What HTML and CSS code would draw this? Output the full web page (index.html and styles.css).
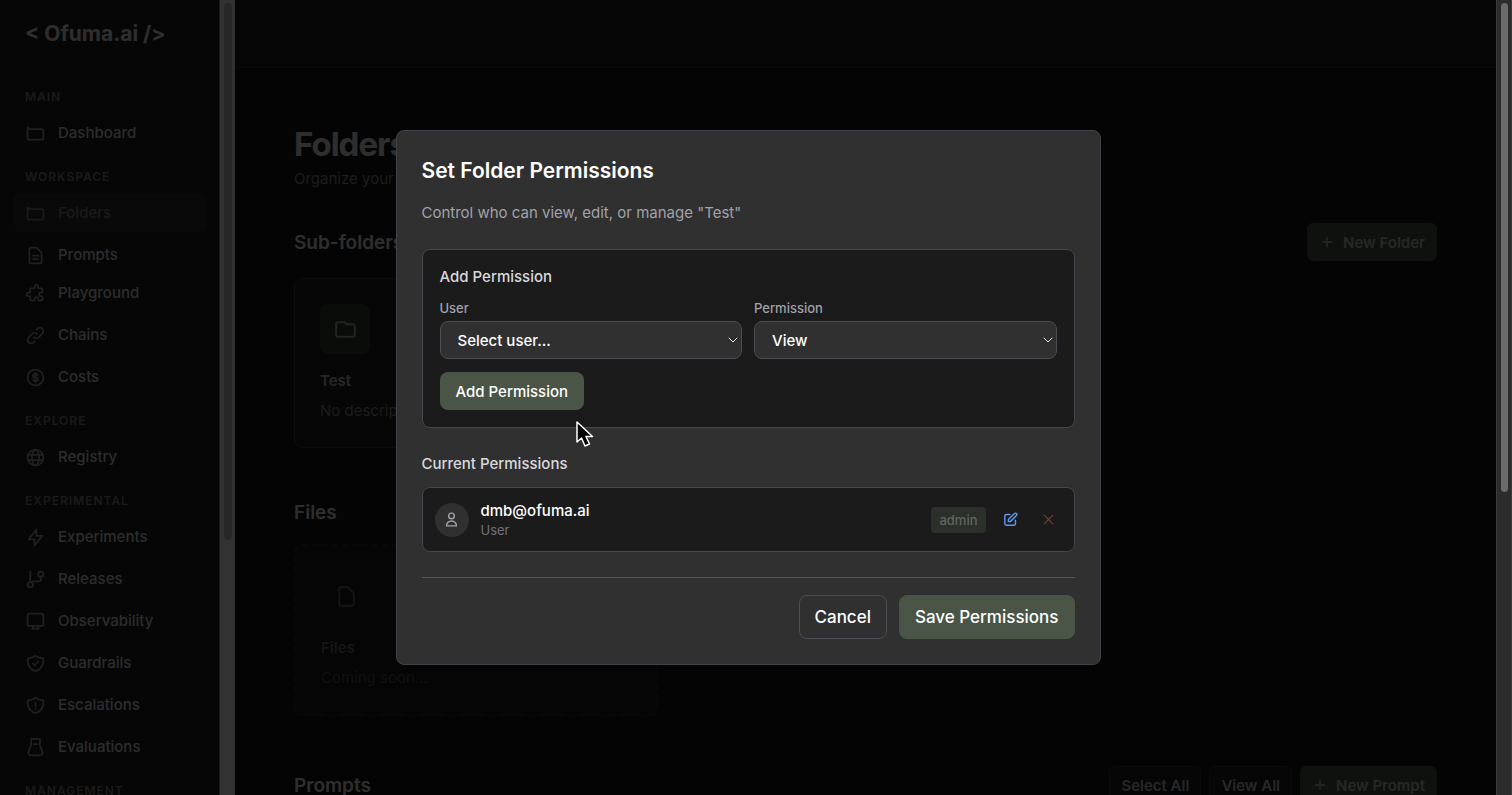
FILE: index.html
```html
<!DOCTYPE html>
<html lang="en">
<head>
    <meta charset="UTF-8">
    <meta name="viewport" content="width=device-width, initial-scale=1.0">
    <title>Folders - Ofuma.ai</title>
    <link rel="stylesheet" href="styles.css">
</head>
<body>
    <div class="app">
        <aside class="sidebar">
            <div class="sidebar-content">
                <div class="logo">&lt; Ofuma.ai /&gt;</div>
                <nav class="nav">
                    <h3 class="nav-label">MAIN</h3>
                    <a href="#" class="nav-item">
                        <svg viewBox="0 0 24 24"><path d="M3 7v10a2 2 0 002 2h14a2 2 0 002-2V9a2 2 0 00-2-2H5a2 2 0 00-2-2z"/></svg>
                        Dashboard
                    </a>
                    <h3 class="nav-label">WORKSPACE</h3>
                    <a href="#" class="nav-item active">
                        <svg viewBox="0 0 24 24"><path d="M3 7v10a2 2 0 002 2h14a2 2 0 002-2V9a2 2 0 00-2-2H5a2 2 0 00-2-2z"/></svg>
                        Folders
                    </a>
                    <div class="nav-group">
                        <a href="#" class="nav-item">
                            <svg viewBox="0 0 24 24"><path d="M9 12h6m-6 4h6m2 5H7a2 2 0 01-2-2V5a2 2 0 012-2h5.586a1 1 0 01.707.293l5.414 5.414a1 1 0 01.293.707V19a2 2 0 01-2 2z"/></svg>
                            Prompts
                        </a>
                        <a href="#" class="nav-item">
                            <svg viewBox="0 0 24 24"><path d="M11 4a2 2 0 114 0v1a1 1 0 001 1h3a1 1 0 011 1v3a1 1 0 01-1 1h-1a2 2 0 100 4h1a1 1 0 011 1v3a1 1 0 01-1 1h-3a1 1 0 01-1-1v-1a2 2 0 10-4 0v1a1 1 0 01-1 1H7a1 1 0 01-1-1v-3a1 1 0 00-1-1H4a2 2 0 110-4h1a1 1 0 001-1V7a1 1 0 011-1h3a1 1 0 001-1V4z"/></svg>
                            Playground
                        </a>
                    </div>
                    <a href="#" class="nav-item">
                        <svg viewBox="0 0 24 24"><path d="M13.828 10.172a4 4 0 00-5.656 0l-4 4a4 4 0 105.656 5.656l1.102-1.101m-.758-4.899a4 4 0 005.656 0l4-4a4 4 0 00-5.656-5.656l-1.1 1.1"/></svg>
                        Chains
                    </a>
                    <a href="#" class="nav-item">
                        <svg viewBox="0 0 24 24"><path d="M12 8c-1.657 0-3 .895-3 2s1.343 2 3 2 3 .895 3 2-1.343 2-3 2m0-8c1.11 0 2.08.402 2.599 1M12 8V7m0 1v8m0 0v1m0-1c-1.11 0-2.08-.402-2.599-1M21 12a9 9 0 11-18 0 9 9 0 0118 0z"/></svg>
                        Costs
                    </a>
                    <h3 class="nav-label">EXPLORE</h3>
                    <a href="#" class="nav-item">
                        <svg viewBox="0 0 24 24"><circle cx="12" cy="12" r="9"/><ellipse cx="12" cy="12" rx="4" ry="9"/><path d="M3.5 9h17M3.5 15h17"/></svg>
                        Registry
                    </a>
                    <h3 class="nav-label">EXPERIMENTAL</h3>
                    <a href="#" class="nav-item">
                        <svg viewBox="0 0 24 24"><path d="M13 10V3L4 14h7v7l9-11h-7z"/></svg>
                        Experiments
                    </a>
                    <a href="#" class="nav-item">
                        <svg viewBox="0 0 24 24"><path d="M6 3v12M18 9v3a2 2 0 01-2 2H9"/><circle cx="6" cy="18" r="3"/><circle cx="18" cy="6" r="3"/></svg>
                        Releases
                    </a>
                    <a href="#" class="nav-item">
                        <svg viewBox="0 0 24 24"><path d="M9 17v3H8h8h-1v-3M5 17h14a2 2 0 002-2V5a2 2 0 00-2-2H5a2 2 0 00-2 2v10a2 2 0 002 2z"/></svg>
                        Observability
                    </a>
                    <a href="#" class="nav-item">
                        <svg viewBox="0 0 24 24"><path d="M9 12l2 2 4-4m5.618-4.016A11.955 11.955 0 0112 2.944a11.955 11.955 0 01-8.618 3.04A12.02 12.02 0 003 9c0 5.591 3.824 10.29 9 11.622 5.176-1.332 9-6.03 9-11.622 0-1.042-.133-2.052-.382-3.016z"/></svg>
                        Guardrails
                    </a>
                    <a href="#" class="nav-item">
                        <svg viewBox="0 0 24 24"><path d="M12 9v4m0 3h.01m8.608-10.016A11.955 11.955 0 0112 2.944a11.955 11.955 0 01-8.618 3.04A12.02 12.02 0 003 9c0 5.591 3.824 10.29 9 11.622 5.176-1.332 9-6.03 9-11.622 0-1.042-.133-2.052-.382-3.016z"/></svg>
                        Escalations
                    </a>
                    <a href="#" class="nav-item">
                        <svg viewBox="0 0 24 24"><path d="M7 2h10v7l3 8a3 3 0 01-3 4H7a3 3 0 01-3-4l3-8zM10 8h4"/></svg>
                        Evaluations
                    </a>
                    <h3 class="nav-label">MANAGEMENT</h3>
                </nav>
            </div>
            <div class="scrollbar"><div class="thumb thumb-sidebar"></div></div>
        </aside>

        <div class="main">
            <header class="topbar"></header>
            <main class="content">
                <h1>Folders</h1>
                <p class="lead">Organize your prompts into folders</p>

                <section class="section">
                    <div class="section-head">
                        <h2>Sub-folders</h2>
                        <button class="btn-dark primary">
                            <svg viewBox="0 0 24 24"><path d="M12 5v14m7-7H5"/></svg>
                            New Folder
                        </button>
                    </div>
                    <div class="cards">
                        <div class="card">
                            <div class="card-icon">
                                <svg viewBox="0 0 24 24"><path d="M3 7v10a2 2 0 002 2h14a2 2 0 002-2V9a2 2 0 00-2-2h-6l-2-2H5a2 2 0 00-2 2z"/></svg>
                            </div>
                            <h3>Test</h3>
                            <p>No description</p>
                        </div>
                    </div>
                </section>

                <section class="section">
                    <div class="section-head">
                        <h2>Files</h2>
                    </div>
                    <div class="cards">
                        <div class="card coming-soon">
                            <div class="card-icon">
                                <svg viewBox="0 0 24 24"><path d="M7 21h10a2 2 0 002-2V9.414a1 1 0 00-.293-.707l-5.414-5.414A1 1 0 0012.586 3H7a2 2 0 00-2 2v14a2 2 0 002 2z"/></svg>
                            </div>
                            <h3>Files</h3>
                            <p>Coming soon...</p>
                        </div>
                    </div>
                </section>

                <section class="section">
                    <div class="section-head">
                        <h2>Prompts</h2>
                        <div class="actions">
                            <button class="btn-dark">Select All</button>
                            <button class="btn-dark">View All</button>
                            <button class="btn-dark primary">
                                <svg viewBox="0 0 24 24"><path d="M12 5v14m7-7H5"/></svg>
                                New Prompt
                            </button>
                        </div>
                    </div>
                </section>
            </main>
        </div>
        <div class="scrollbar page-scrollbar"><div class="thumb thumb-page"></div></div>
    </div>

    <div class="overlay">
        <div class="modal" role="dialog" aria-labelledby="modal-title">
            <h2 id="modal-title" class="modal-title">Set Folder Permissions</h2>
            <p class="modal-text">Control who can view, edit, or manage "Test"</p>

            <div class="panel">
                <h3 class="panel-title">Add Permission</h3>
                <div class="fields">
                    <div class="field">
                        <label for="user">User</label>
                        <div class="select-wrap">
                            <select id="user">
                                <option>Select user...</option>
                            </select>
                            <svg viewBox="0 0 10 6"><path d="M1 1l4 4 4-4"/></svg>
                        </div>
                    </div>
                    <div class="field">
                        <label for="permission">Permission</label>
                        <div class="select-wrap">
                            <select id="permission">
                                <option>View</option>
                                <option>Edit</option>
                                <option>Admin</option>
                            </select>
                            <svg viewBox="0 0 10 6"><path d="M1 1l4 4 4-4"/></svg>
                        </div>
                    </div>
                </div>
                <button class="btn-add">Add Permission</button>
            </div>

            <h3 class="list-title">Current Permissions</h3>
            <div class="permission">
                <div class="avatar">
                    <svg viewBox="0 0 24 24"><path d="M16 7a4 4 0 11-8 0 4 4 0 018 0zM12 14a7 7 0 00-7 7h14a7 7 0 00-7-7z"/></svg>
                </div>
                <div class="who">
                    <div class="email">dmb@ofuma.ai</div>
                    <div class="type">User</div>
                </div>
                <span class="badge">admin</span>
                <button class="icon-btn edit" aria-label="Edit permission">
                    <svg viewBox="0 0 24 24"><path d="M11 5H6a2 2 0 00-2 2v11a2 2 0 002 2h11a2 2 0 002-2v-5m-1.414-9.414a2 2 0 112.828 2.828L11.828 15H9v-2.828l8.586-8.586z"/></svg>
                </button>
                <button class="icon-btn remove" aria-label="Remove permission">
                    <svg viewBox="0 0 24 24"><path d="M4 20L20 4M4 4l16 16"/></svg>
                </button>
            </div>

            <div class="modal-footer">
                <button class="btn btn-cancel">Cancel</button>
                <button class="btn btn-save">Save Permissions</button>
            </div>
        </div>
    </div>

    <svg class="cursor" viewBox="0 0 18 26"><path d="M1 1v20l4.500-4 3.500 8 4.500-2-3.500-7.500h6.500z"/></svg>
</body>
</html>
```
FILE: styles.css
```css
* {
    box-sizing: border-box;
}
body {
    margin: 0;
    font-family: Inter, 'Liberation Sans', sans-serif;
    font-size: 15px;
    line-height: 22px;
    background: #141414;
    color: #e6e6e6;
}
h1, h2, h3, p {
    margin: 0;
}
button, select {
    font-family: inherit;
}
svg {
    display: block;
    flex-shrink: 0;
    fill: none;
    stroke: currentColor;
    stroke-width: 2;
    stroke-linecap: round;
    stroke-linejoin: round;
}
.app {
    display: flex;
    height: 100vh;
    overflow: hidden;
}

/* Sidebar */
.sidebar {
    display: flex;
    flex-shrink: 0;
    background: #1e1e1e;
}
.sidebar-content {
    width: 220px;
    padding: 0 13px;
    border-right: 1px solid #969696;
    overflow: hidden;
}
.logo {
    height: 68px;
    padding: 0 12px;
    line-height: 68px;
    font-size: 21px;
    font-weight: 700;
    color: #e6e6e6;
}
.nav {
    display: flex;
    flex-direction: column;
    gap: 4px;
    padding-top: 8px;
}
.nav-label {
    margin: 12px 0 4px;
    padding: 0 12px;
    font-size: 12px;
    line-height: 18px;
    font-weight: 600;
    letter-spacing: 1px;
    color: #828282;
}
.nav-item {
    display: flex;
    align-items: center;
    gap: 12px;
    height: 38px;
    padding: 0 13px 0 12px;
    border-radius: 6px;
    font-weight: 500;
    color: #dcdcdc;
    text-decoration: none;
}
.nav-item svg {
    width: 21px;
    height: 21px;
    color: #9b9ea4;
}
.nav-item.active {
    background: #2d2f2d;
    color: #7c807c;
}
.nav-item.active svg {
    color: #7c807c;
}

/* Scrollbars */
.scrollbar {
    width: 15px;
    flex-shrink: 0;
    padding: 3px 3px 3px 4px;
    background: #fafafa;
}
.thumb {
    border-radius: 4px;
    background: #c1c1c1;
}
.thumb-sidebar {
    height: 68%;
}
.page-scrollbar {
    width: 16px;
    background: #2c2c2c;
    border-left: 1px solid #3c3c3c;
    border-right: 1px solid #3c3c3c;
}
.thumb-page {
    height: 62%;
    background: #6b6b6b;
}

/* Page */
.main {
    flex: 1;
    min-width: 0;
}
.topbar {
    height: 68px;
    background: #1c1c1c;
    border-bottom: 1px solid #303030;
}
.content {
    padding: 56px 59px 0;
}
h1 {
    font-size: 33px;
    line-height: 40px;
    font-weight: 700;
    letter-spacing: -1px;
    margin-bottom: 4px;
}
.lead {
    color: #8c8c8c;
    margin-bottom: 33px;
}
.section {
    margin-bottom: 50px;
}
.section-head {
    display: flex;
    justify-content: space-between;
    align-items: center;
    margin-bottom: 17px;
}
.section-head h2 {
    font-size: 19px;
    line-height: 29px;
    font-weight: 600;
    color: #e6e6e6;
}
.actions {
    display: flex;
    gap: 8px;
}
.btn-dark {
    display: flex;
    align-items: center;
    gap: 8px;
    height: 38px;
    padding: 0 11px;
    border: 1px solid #343434;
    border-radius: 6px;
    background: #202020;
    font-size: 15px;
    font-weight: 600;
    color: #c4c4c4;
}
.btn-dark.primary {
    background: #4a5547;
    border-color: #4a5547;
}
.btn-dark svg {
    width: 16px;
    height: 16px;
}
.cards {
    display: grid;
    grid-template-columns: repeat(3, 1fr);
    gap: 25px;
}
.card {
    padding: 25px;
    border: 1px solid #3c3c3c;
    border-radius: 8px;
    background: #202020;
}
.card-icon {
    display: flex;
    align-items: center;
    justify-content: center;
    width: 50px;
    height: 50px;
    margin-bottom: 16px;
    border-radius: 8px;
    background: #343c34;
    color: #a8a8a8;
}
.card-icon svg {
    width: 25px;
    height: 25px;
}
.card h3 {
    margin-bottom: 8px;
    font-size: 15px;
    font-weight: 600;
    color: #c4c4c4;
}
.card p {
    color: #8c8c8c;
}
.card.coming-soon {
    border: 2px dashed #3c3c3c;
    opacity: 0.5;
}
.coming-soon .card-icon {
    background: #242424;
}

/* Modal */
.overlay {
    position: fixed;
    inset: 0 16px 0 0;
    display: flex;
    align-items: center;
    justify-content: center;
    background: rgba(0, 0, 0, 0.8);
}
.modal {
    width: 100%;
    max-width: 705px;
    padding: 25px;
    border: 1px solid #42424a;
    border-radius: 8px;
    background: #303030;
}
.modal-title {
    margin-bottom: 17px;
    font-size: 21px;
    line-height: 29px;
    font-weight: 600;
    color: #fff;
}
.modal-text {
    margin-bottom: 25px;
    color: #a1a1aa;
}
.panel {
    margin-bottom: 25px;
    padding: 17px;
    border: 1px solid #46464e;
    border-radius: 8px;
    background: #1b1b1b;
}
.panel-title {
    margin-bottom: 12px;
    font-size: 15px;
    line-height: 20px;
    font-weight: 500;
    color: #d9d9dc;
}
.fields {
    display: grid;
    grid-template-columns: 1fr 1fr;
    gap: 12px;
    margin-bottom: 13px;
}
.field label {
    display: block;
    margin-bottom: 4px;
    font-size: 13px;
    line-height: 18px;
    font-weight: 500;
    color: #a1a1aa;
}
.select-wrap {
    position: relative;
}
.select-wrap select {
    display: block;
    appearance: none;
    width: 100%;
    height: 38px;
    padding: 0 17px;
    border: 1px solid #4c4c54;
    border-radius: 8px;
    background: #303030;
    font-size: 15px;
    font-weight: 500;
    color: #fff;
}
.select-wrap svg {
    position: absolute;
    right: 4px;
    top: 16px;
    width: 10px;
    height: 6px;
    color: #e6e6e6;
    stroke-width: 1;
    pointer-events: none;
}
.btn-add {
    display: block;
    height: 38px;
    padding: 0 16px;
    border: none;
    border-radius: 8px;
    background: #4a5547;
    font-size: 15px;
    font-weight: 500;
    color: #fff;
}
.list-title {
    margin-bottom: 13px;
    font-size: 15px;
    line-height: 21px;
    font-weight: 500;
    color: #d9d9dc;
}
.permission {
    display: flex;
    align-items: center;
    gap: 12px;
    margin-bottom: 25px;
    padding: 12px;
    border: 1px solid #46464e;
    border-radius: 8px;
    background: #1b1b1b;
}
.avatar {
    display: flex;
    align-items: center;
    justify-content: center;
    width: 34px;
    height: 34px;
    border-radius: 50%;
    background: #303030;
    color: #a1a1aa;
}
.avatar svg {
    width: 17px;
    height: 17px;
}
.who {
    flex: 1;
}
.email {
    font-weight: 500;
    color: #fff;
}
.type {
    font-size: 13px;
    line-height: 17px;
    color: #71717a;
}
.badge {
    padding: 4px 8px;
    border-radius: 4px;
    background: #2b302b;
    font-size: 13px;
    line-height: 18px;
    font-weight: 500;
    color: #626662;
}
.icon-btn {
    display: flex;
    align-items: center;
    justify-content: center;
    width: 26px;
    height: 26px;
    padding: 0;
    border: none;
    background: none;
}
.icon-btn svg {
    width: 17px;
    height: 17px;
}
.icon-btn.edit {
    color: #6299f0;
}
.icon-btn.remove {
    color: #823d33;
}
.icon-btn.remove svg {
    width: 13px;
    height: 13px;
}
.modal-footer {
    display: flex;
    justify-content: flex-end;
    gap: 12px;
    padding-top: 17px;
    border-top: 1px solid #54545c;
}
.btn {
    height: 44px;
    padding: 0 15px;
    border: 1px solid #4a5547;
    border-radius: 8px;
    font-size: 17px;
    font-weight: 500;
    color: #fff;
}
.btn-cancel {
    background: #303030;
    border-color: #4c4c54;
}
.btn-save {
    background: #4a5547;
}

/* Pointer floats above everything */
.cursor {
    position: fixed;
    left: 576px;
    top: 421px;
    width: 18px;
    height: 26px;
    fill: #000;
    stroke: #fff;
    stroke-width: 1.5;
}
```
